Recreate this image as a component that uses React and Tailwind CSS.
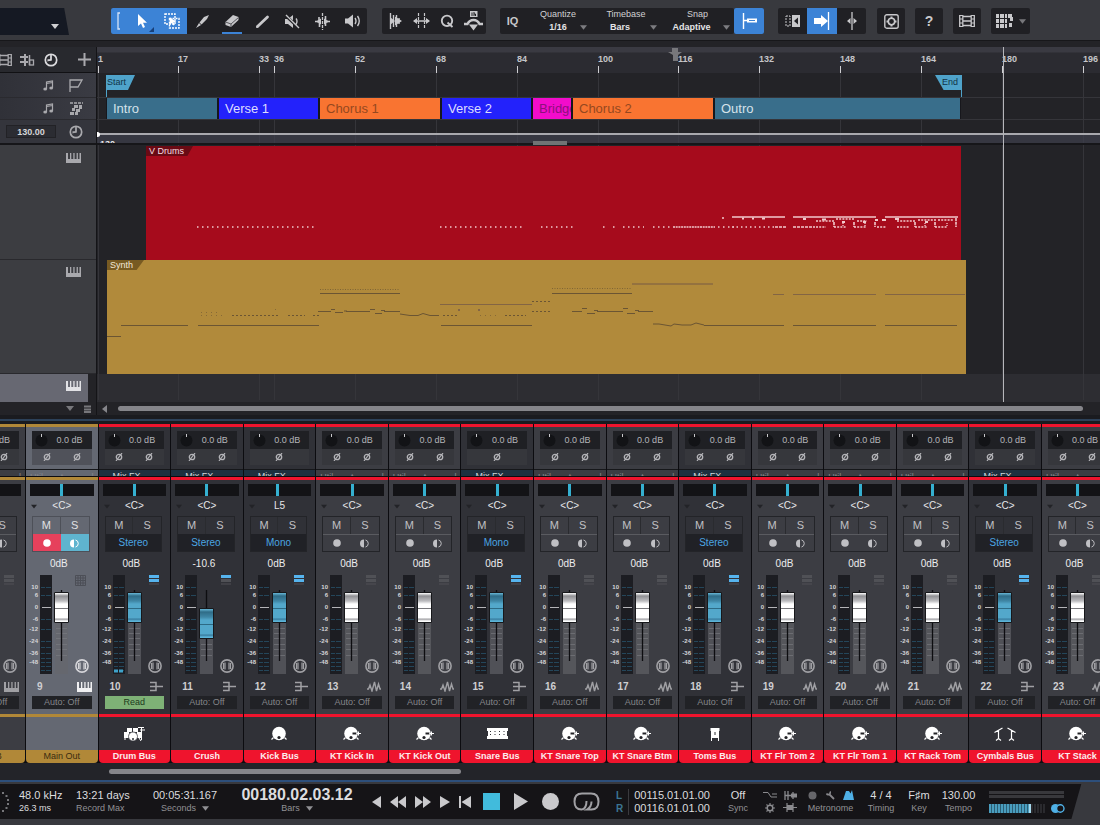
import React from 'react';
import clsx from 'clsx';

const RULER = [1, 17, 33, 36, 52, 68, 84, 100, 116, 132, 148, 164, 180, 196];
const RULER_COLS =
  'grid-cols-[1fr_80fr_81fr_15fr_81fr_81fr_81fr_81fr_80fr_81fr_81fr_81fr_81fr_81fr_17fr]';

const SECTIONS = [
  { name: 'Intro', style: 'bg-[#396e8b] text-[#d5e2ea]' },
  { name: 'Verse 1', style: 'bg-[#2322fb] text-[#dedeff]' },
  { name: 'Chorus 1', style: 'bg-[#f97431] text-[#95481f]' },
  { name: 'Verse 2', style: 'bg-[#2322fb] text-[#dedeff]' },
  { name: 'Bridge', style: 'bg-[#f20ccb] text-[#8d0f7d]' },
  { name: 'Chorus 2', style: 'bg-[#f97431] text-[#95481f]' },
  { name: 'Outro', style: 'bg-[#396e8b] text-[#d5e2ea]' },
];

const CHANNELS = [
  { no: 9, name: 'Main Out', kind: 'main' },
  { no: 10, name: 'Drum Bus', kind: 'bus', width: 'Stereo', icon: 'kit', read: true },
  { no: 11, name: 'Crush', kind: 'bus', width: 'Stereo', gain: '-10.6', level: 52 },
  { no: 12, name: 'Kick Bus', kind: 'bus', width: 'Mono', pan: -5, icon: 'kick' },
  { no: 13, name: 'KT Kick In', kind: 'track', icon: 'mic' },
  { no: 14, name: 'KT Kick Out', kind: 'track', icon: 'mic' },
  { no: 15, name: 'Snare Bus', kind: 'bus', width: 'Mono', icon: 'snare' },
  { no: 16, name: 'KT Snare Top', kind: 'track', icon: 'mic' },
  { no: 17, name: 'KT Snare Btm', kind: 'track', icon: 'mic' },
  { no: 18, name: 'Toms Bus', kind: 'bus', width: 'Stereo', icon: 'tom' },
  { no: 19, name: 'KT Flr Tom 2', kind: 'track', icon: 'mic' },
  { no: 20, name: 'KT Flr Tom 1', kind: 'track', icon: 'mic' },
  { no: 21, name: 'KT Rack Tom', kind: 'track', icon: 'mic' },
  { no: 22, name: 'Cymbals Bus', kind: 'bus', width: 'Stereo', icon: 'cymbals' },
];

const Svg = ({ w, h, children, className }) => (
  <svg width={w} height={h} viewBox={`0 0 ${w} ${h}`} className={clsx('shrink-0', className)} fill="none" stroke="currentColor" aria-hidden="true">
    {children}
  </svg>
);

const Down = ({ className }) => (
  <Svg w={8} h={5} className={className}><path d="M0 0h8L4 5z" fill="currentColor" stroke="none" /></Svg>
);

const Keys = ({ className }) => (
  <Svg w={15} h={10} className={className}>
    <path d="M0 0h2v6h2V0h1.3v6h2V0h1.3v6h2V0h1.3v6h1.6V0H15v10H0z" fill="currentColor" stroke="none" />
  </Svg>
);

const Note = () => (
  <Svg w={11} h={11}>
    <path d="M3.5 9V2l6-1v7M3.5 3.5l6-1" strokeWidth="1.2" />
    <ellipse cx="2.2" cy="9" rx="1.9" ry="1.5" fill="currentColor" stroke="none" />
    <ellipse cx="8.2" cy="8" rx="1.9" ry="1.5" fill="currentColor" stroke="none" />
  </Svg>
);

const Clock = () => (
  <Svg w={14} h={14}>
    <circle cx="7" cy="7" r="5.7" strokeWidth="1.7" />
    <path d="M7 2v5H3.5" strokeWidth="1.5" />
    <path d="M7 2.5v4.3L3.5 8" strokeWidth="1" />
  </Svg>
);

const Film = () => (
  <Svg w={16} h={14}>
    <path d="M.7 1v12M3.8 1v12M12.2 1v12M15.3 1v12M3.8 2.500h8.400M3.8 7h8.400M3.8 11.500h8.400" strokeWidth="1.3" />
    <path d="M.7 1.5h3M.7 5h3M.7 9h3M.7 12.5h3M12.200 1.500h3M12.200 5h3M12.200 9h3M12.200 12.500h3" strokeWidth="1" />
  </Svg>
);

/* ---------- toolbar ---------- */

const Tool = ({ label, on, underline, className, children }) => (
  <button
    type="button"
    aria-label={label}
    className={clsx('relative flex h-full items-center justify-center', on ? 'bg-[#3c83d6] text-white' : 'text-[#c8c8cb]', className || 'w-[30px]')}
  >
    {children}
    {underline && <span className="absolute bottom-0 h-[2px] w-5 bg-[#3c83d6]" />}
  </button>
);

const Group = ({ className, children }) => (
  <div className={clsx('flex h-[26px] shrink-0 overflow-hidden rounded-[2px] bg-[#202024]', className)}>{children}</div>
);

const Picker = ({ label, value, className, textPad }) => (
  <label className={clsx('relative flex flex-col text-center text-[9px] text-[#d0d0d3]', className)}>
    <span className="h-[13px] leading-[13px]">{label}</span>
    <select defaultValue={value} className={clsx('h-[13px] w-full appearance-none bg-transparent font-bold leading-[13px] text-[#e4e4e6] [text-align-last:center]', textPad)}>
      <option>{value}</option>
    </select>
    <Down className="absolute bottom-1 right-1 w-[7px] text-[#7c7c80]" />
  </label>
);

const Toolbar = () => (
  <header className="flex h-[41px] items-start overflow-hidden border-b border-[#17171a] bg-[#38393e] pt-2">
    <button type="button" aria-label="Preset" className="flex h-[27px] w-[69px] shrink-0 items-end justify-end bg-[#151923] pb-[6px] pr-[10px] text-[#d0d0d3] [clip-path:polygon(0_0,93%_0,100%_100%,0_100%)]">
      <Down />
    </button>
    <Group className="ml-[42px]">
      <span className="flex w-4 items-center justify-center bg-[#3c83d6] text-[#d5e4f8]">
        <Svg w={6} h={18}><path d="M4 1H2v16h2" strokeWidth="1.3" /></Svg>
      </span>
      <Tool label="Arrow tool" on>
        <Svg w={12} h={16}><path d="M2 1v12l3-2.6L7 15l2-1-2-4.3h4z" fill="currentColor" stroke="none" /></Svg>
        <Svg w={5} h={5} className="absolute bottom-[2px] right-[3px] text-[#173f78]"><path d="M5 0v5H0z" fill="currentColor" stroke="none" /></Svg>
      </Tool>
      <Tool label="Range tool" on>
        <Svg w={16} h={16}>
          <path d="M1 1h10v10H1z" strokeWidth="1.4" strokeDasharray="2 1" />
          <path d="M5.500 5.500h9.500v9.500H5.500z" strokeWidth="1.4" strokeDasharray="2 1" />
          <path d="M6 4.500v7l2-1.500 1.500 2.500 1.300-.8L9.500 9h3z" fill="currentColor" stroke="none" />
        </Svg>
      </Tool>
      <Tool label="Split tool">
        <Svg w={15} h={15}><path d="M14 1 9 3 4.5 8.5l2 2L12 5zM4 9l-3 5 5-3z" fill="currentColor" stroke="none" /></Svg>
      </Tool>
      <Tool label="Eraser tool" underline>
        <Svg w={16} h={14}>
          <path d="M1.5 8 9 1l5.5 2v3L7 13 1.5 11z" fill="currentColor" stroke="none" />
          <path d="M1.5 8 7 10l7.5-6.5M7 10v3" stroke="#55555a" strokeWidth="1" />
        </Svg>
      </Tool>
      <Tool label="Paint tool">
        <Svg w={15} h={15}><path d="M2.5 12.5 12.5 3" strokeWidth="2.8" strokeLinecap="round" /><path d="M1 14l1-3 2 2z" fill="currentColor" stroke="none" /></Svg>
      </Tool>
      <Tool label="Mute tool">
        <Svg w={16} h={15}>
          <path d="M1 5h3l5-4v13l-5-4H1z" fill="currentColor" stroke="none" />
          <path d="M1 1l14 13" stroke="#202024" strokeWidth="3" />
          <path d="M2 1l13 13M12 4.5q2 2.5 0 6" strokeWidth="1.4" />
        </Svg>
      </Tool>
      <Tool label="Bend tool">
        <Svg w={15} h={17}>
          <path d="M7.5 0v17" strokeWidth="1.3" strokeDasharray="3 1" />
          <path d="M0 8.5h3M12 8.5h3M4 4v4M4.5 10v4M10.5 3v4M10.5 10v3" strokeWidth="1.6" />
          <path d="M1 8.5 6 5.500v6zM14 8.500l-5-3v6z" fill="currentColor" stroke="none" />
        </Svg>
      </Tool>
      <Tool label="Listen tool">
        <Svg w={17} h={14}>
          <path d="M1 4.5h3L9 .5v13L4 9.5H1z" fill="currentColor" stroke="none" />
          <path d="M11 4q2 3 0 6M13.5 2q3.5 5 0 10" strokeWidth="1.4" />
        </Svg>
      </Tool>
    </Group>
    <Group className="ml-[15px]">
      <Tool label="Strip silence" className="w-[26px]">
        <Svg w={13} h={16}><path d="M1.5 0v16M4.5 2v12M7.5 2v12M10 5v6" strokeWidth="1.4" /><path d="M1 4l5 4-5 4zM6 3.500l7 4.500-7 4.500z" fill="currentColor" stroke="none" /></Svg>
      </Tool>
      <Tool label="Bend markers" className="w-[26px]">
        <Svg w={17} h={16}><path d="M1 8h15" strokeWidth="1.5" /><path d="M5.5 0v16M11.5 0v16" strokeWidth="1.2" strokeDasharray="3 1" /><path d="M0 8l4-3v6zM17 8l-4-3v6z" fill="currentColor" stroke="none" /></Svg>
      </Tool>
      <Tool label="Quantize" className="w-[26px]">
        <Svg w={14} h={14}><circle cx="7" cy="6.8" r="5.2" strokeWidth="1.9" /><path d="M7.5 8.5l5 4.5" strokeWidth="1.9" /></Svg>
      </Tool>
      <Tool label="Macro" className="w-[26px]">
        <Svg w={19} h={20}>
          <path d="M6 0h7.500v6H6z" fill="currentColor" stroke="none" />
          <path d="M8 1.500V5M10 1v4M10 3h1.500v2" stroke="#202024" />
          <path d="M0 13h3.500q2-4 6-4t6 4H19" strokeWidth="2.400" />
          <path d="M5 13.500h9L9.500 19.500z" fill="currentColor" stroke="none" />
        </Svg>
      </Tool>
    </Group>
    <Group className="ml-[14px]">
      <Tool label="Input quantize" className="w-[25px] text-[11px] font-bold">IQ</Tool>
      <Picker label="Quantize" value="1/16" className="w-[66px]" />
      <Picker label="Timebase" value="Bars" className="w-[70px]" textPad="pr-3" />
      <Picker label="Snap" value="Adaptive" className="w-[73px]" textPad="pr-3" />
    </Group>
    <Group>
      <Tool label="Snap toggle" on>
        <Svg w={15} h={16}><path d="M1.500 0v16" strokeWidth="1.400" /><path d="M2 7.500h4" strokeWidth="1.400" /><path d="M5 5.500h10v4H5z" fill="currentColor" stroke="none" /><path d="M7 7.500h6" stroke="#3c83d6" strokeWidth="1" /></Svg>
      </Tool>
    </Group>
    <Group className="ml-[14px]">
      <Tool label="Autoscroll page" className="w-[29px]">
        <Svg w={15} h={12}><path d="M1 1h4v10H1z" strokeDasharray="2 1" /><path d="M7 0h8v12H7z" fill="currentColor" stroke="none" /><path d="M13 2.500v7L9 6z" fill="#202024" stroke="none" /></Svg>
      </Tool>
      <Tool label="Autoscroll" on>
        <Svg w={16} h={18}><path d="M14.500 0v18" strokeWidth="1.300" /><path d="M0 6h7V3l7 6-7 6v-3H0z" fill="currentColor" stroke="none" /></Svg>
      </Tool>
      <Tool label="Cursor follows edit" className="w-[29px]">
        <Svg w={12} h={18}><path d="M6 0v18" strokeWidth="1.300" /><path d="M1 9l3.500-3v6zM11 9 7.500 6v6z" fill="currentColor" stroke="none" /></Svg>
      </Tool>
    </Group>
    <Group className="ml-[11px]">
      <Tool label="Plug-in" className="w-[28px]">
        <Svg w={15} h={15}><rect x=".8" y=".8" width="13.400" height="13.400" rx="2" strokeWidth="1.400" /><circle cx="7.500" cy="7.500" r="3.200" strokeWidth="1.600" /><path d="M7.500 2.500v2M7.500 10.500v2M2.500 7.500h2M10.500 7.500h2" strokeWidth="2" /></Svg>
      </Tool>
    </Group>
    <Group className="ml-[10px]">
      <Tool label="Help" className="w-[28px] text-[14px] font-bold">?</Tool>
    </Group>
    <Group className="ml-[10px]">
      <Tool label="Video" className="w-[28px]"><Film /></Tool>
    </Group>
    <Group className="ml-[10px]">
      <Tool label="Performance" className="w-[39px] gap-1">
        <Svg w={20} h={16}>
          <path d="M1 1h3v4H1zM5 1h4v4H5zM10 1h2v4h-2zM1 6h3v4H1zM5 6h4v4H5zM1 11h3v4H1zM5 11h4v4H5zM10 6h2v4h-2zM10 11h2v4h-2zM13 1h4v3h1v4h-3V5h-2zM14 10h3v4h-3z" fill="currentColor" stroke="none" />
        </Svg>
        <Down className="w-[7px] text-[#77777b]" />
      </Tool>
    </Group>
  </header>
);

/* ---------- arrangement ---------- */

const LaneHeads = () => (
  <div className="flex w-[97px] shrink-0 flex-col overflow-hidden border-r border-[#141417] text-[#a9a9ad]">
    <div className="flex h-[26px] items-center justify-between border-b border-[#111114] bg-[#28292e] pr-[5px]">
      <button type="button" aria-label="Film" className="flex w-[12px] justify-end overflow-hidden"><Film /></button>
      <button type="button" aria-label="Lanes">
        <Svg w={15} h={14}><path d="M0 4h8M0 9h8M5 1v12" strokeWidth="2" /><path d="M9.500 2v10" strokeWidth="1.500" /><rect x="9.500" y="7" width="4" height="5" strokeWidth="1.300" /></Svg>
      </button>
      <button type="button" aria-label="Timebase" className="text-[#dcdcdf]"><Clock /></button>
      <span className="w-1" />
      <button type="button" aria-label="Add track"><Svg w={13} h={13}><path d="M6.500 0v13M0 6.500h13" strokeWidth="2" /></Svg></button>
    </div>
    <div className="flex h-[25px] items-center justify-end gap-[15px] border-b border-[#2a2a2f] bg-linear-to-r from-[#303138] to-[#3a3b43] pr-[13px]">
      <Note />
      <Svg w={14} h={13}><path d="M1 13V1h12L9 8H1" strokeWidth="1.300" /></Svg>
    </div>
    <div className="flex h-[22px] items-center justify-end gap-[15px] border-b border-[#2a2a2f] bg-linear-to-r from-[#303138] to-[#3a3b43] pr-[13px]">
      <Note />
      <Svg w={14} h={13}><path d="M1 1h13" strokeDasharray="3 1" strokeWidth="1.400" /><path d="M5 3h4v3H5zM10 3h3v4h-3zM3 6h3v3H3zM7 7h4v3H7zM1 10h4v3H1zM6 10h3v3H6z" fill="currentColor" stroke="none" /></Svg>
    </div>
    <div className="flex h-[23px] items-center justify-end gap-[13px] bg-[#34353c] pr-[13px]">
      <input aria-label="Tempo" defaultValue="130.00" className="h-[13px] w-[50px] border border-[#222226] bg-[#2b2c32] text-center text-[9px] font-bold text-[#d6d6d9]" />
      <Clock />
    </div>
    <div className="h-[2px] bg-[#161619]" />
    <div className="h-[115px] border-b border-[#29292d] bg-[#3c3d41] pl-[66px] pt-2">
      <Keys />
    </div>
    <div className="h-[114px] border-b border-[#29292d] bg-[#3c3d41] pl-[66px] pt-[7px]">
      <Keys />
    </div>
    <div className="mr-2 h-[28px] bg-[#676872] pl-[66px] pt-[7px] text-[#e2e2e6]">
      <Keys />
    </div>
    <div className="flex h-[13px] items-center justify-end gap-[10px] bg-[#232327] pr-[5px] text-[#77777b]">
      <Down />
      <Svg w={7} h={8}><path d="M0 1.500h7M0 4.500h7M0 7h7" strokeWidth="2" /></Svg>
    </div>
  </div>
);

const DrumNotes = () => (
  <svg viewBox="146 146 815 114" preserveAspectRatio="none" className="absolute inset-0 h-full w-full" fill="none" stroke="#f2c9cc" aria-hidden="true">
    <g strokeWidth="1.300">
      <path d="M197 227h119M440 227h84M541 227h33M603 227h2M613 227h2M623 227h21M653 227h20M718 227h16" strokeDasharray="1.500 3.500" />
      <path d="M673 227h42" strokeDasharray="2 .7" />
      <path d="M722 218h2M732 217h53M793 217h83M885 217h73" />
      <path d="M732 227h42" strokeDasharray="1.500 3" />
      <path d="M775 227h12M793 227h22" strokeDasharray="3 1" />
      <path d="M816 221h18M836 219h18M857 221h10M897 221h18M918 220h18M938 220h16M816 227h10M834 227h12M854 227h12M877 227h9M897 227h12M915 227h12M935 227h12" strokeDasharray="2 1.200" />
      <path d="M742 218.500h2M752 218.500h2M762 218.500h3M803 219h3M822 219.500h4M842 222h3M863 222h3M875 220h3M882 220h4M895 219h4M925 222h3" strokeWidth="2" />
      <path d="M834 222v5M854 222v5M875 222v5M915 222v5M935 222v5M956 218v9" strokeWidth="1.600" strokeDasharray="3 .8" />
      <path d="M843 223v4M865 223v4M925 223v4M947 223v4" strokeDasharray="1 1" />
    </g>
  </svg>
);

const SynthNotes = () => (
  <svg viewBox="107 260 859 114" preserveAspectRatio="none" className="absolute inset-0 h-full w-full" fill="none" stroke="#6b5533" aria-hidden="true">
    <path d="M107 336.500h14M121 325.500h67M198 325.500h121M441 325.500h91M704 325.500h80M793 325.500h83M885 325.500h72" />
    <path d="M320 293.500h80M552 293.500h80M318 311.500h13M346 311.500h24M384 311.500h16M572 311.500h10M597 311.500h26M638 311.500h15" />
    <path d="M331 309.500h4M335 312.500h8M344 311h3M370 309.500h5M375 313.500h7M381 310.500h4M582 308.500h5M587 313.500h8M594 310.500h4M623 308.500h5M627 313.500h8M635 310.500h4" />
    <path d="M400 314l10 1.500h8l5-2 7 2h9M653 324h6l12 2 3-2 8 1h9l5-2 8 2" />
    <path d="M232 315.500h48M288 315.500h17M313 315.500h7M443 315.500h14M505 315.500h21M532 301.500h20M532 311.500h20" strokeDasharray="2 2" />
    <path d="M201 315.500h22M201 312.500h20M480 315.500h17M275 309.500h5" strokeDasharray="1 4" strokeOpacity=".6" />
    <path d="M320 289.500h80M552 288.500h80" strokeDasharray="1 1.500" strokeOpacity=".7" />
    <path d="M440 304.500h92M773 294.500h11M793 294.500h83M885 294.500h80" stroke="#836544" />
    <path d="M632 284h81" stroke="#94723f" strokeWidth="2" />
    <path d="M458 310h2M478 310h2" stroke="#836544" strokeWidth="2" />
  </svg>
);

const Arrangement = () => (
  <div className="relative flex min-w-0 flex-1 flex-col overflow-hidden bg-[#232327]">
    <div className={clsx('grid h-[26px] bg-linear-to-b from-[#3a3a42] from-[18%] to-[#2b2b31] to-[24%]', RULER_COLS)}>
      <span />
      {RULER.map((bar) => (
        <span key={bar} className="relative min-w-0 pt-[6px] text-[9px] font-bold leading-[13px] text-[#c5c5c9]">
          {bar}
          <span className="absolute bottom-0 left-0 h-[7px] w-px bg-[#cfcfd2]" />
        </span>
      ))}
    </div>
    <div className={clsx('pointer-events-none absolute inset-x-0 bottom-[15px] top-[26px] grid', RULER_COLS)}>
      <span />
      {RULER.map((bar) => <span key={bar} className="border-l border-[#35353a]" />)}
    </div>
    <div className="absolute inset-x-0 top-0 grid grid-cols-[571fr_432fr] text-[#77777b]">
      <span />
      <Svg w={14} h={14}><path d="M4 1h6v4h4l-4 3v6H5V8L0 5h4z" fill="currentColor" stroke="none" /></Svg>
    </div>

    <div className="relative grid h-[25px] grid-cols-[9fr_829fr_27fr_138fr] border-b border-[#35353a] text-[9px] leading-[15px] text-[#123345]">
      <span />
      <div className="mt-[2px] border-l border-[#4fa3ca]">
        <div className="h-[15px] w-7 bg-[#4fa3ca] [clip-path:polygon(0_0,100%_0,75%_100%,0_100%)]">Start</div>
      </div>
      <div className="mt-[2px] border-r border-[#4fa3ca]">
        <div className="h-[15px] bg-[#4fa3ca] pr-[3px] text-right [clip-path:polygon(0_0,100%_0,100%_100%,33%_100%)]">End</div>
      </div>
    </div>

    <div className="relative grid h-[22px] grid-cols-[9fr_112fr_101fr_122fr_91fr_40fr_142fr_247fr_139fr] border-b border-[#35353a]">
      <span />
      {SECTIONS.map((s) => (
        <div key={s.name} className={clsx('min-w-0 overflow-hidden border-x border-[#17171c] pl-[6px] text-[13px] leading-[21px]', s.style)}>{s.name}</div>
      ))}
    </div>

    <div className="relative h-[25px] border-b-2 border-[#161619]">
      <div className="h-[15px] border-b-2 border-[#a9a9ae]" />
      <div className="h-2 overflow-hidden bg-[#3f404d]/70 pl-[3px] pt-[5px] text-[9px] font-bold leading-[9px] text-[#e5e5e8]">130</div>
      <div className="absolute -bottom-[2px] left-0 grid w-full grid-cols-[436fr_34fr_533fr]"><span /><span className="h-1 bg-[#707475]" /></div>
      <span className="absolute left-0 top-3 h-[5px] w-[3px] rounded-r bg-white" />
    </div>

    <div className="relative grid h-[115px] grid-cols-[49fr_815fr_139fr] pt-px">
      <span />
      <div className="relative bg-[#a60b1c]">
        <span className="absolute left-0 top-0 h-[10px] w-[47px] bg-[#6a0a14] pl-[3px] text-[9px] leading-[10px] text-[#f4dfe1] [clip-path:polygon(0_0,100%_0,88%_100%,0_100%)]">V Drums</span>
        <DrumNotes />
      </div>
    </div>
    <div className="relative grid h-[114px] grid-cols-[10fr_859fr_134fr]">
      <span />
      <div className="relative bg-[#b18a3b]">
        <span className="absolute left-0 top-0 h-[10px] w-[37px] bg-[#775a22] pl-[3px] text-[9px] leading-[10px] text-[#f2e9d8] [clip-path:polygon(0_0,100%_0,80%_100%,0_100%)]">Synth</span>
        <SynthNotes />
      </div>
    </div>
    <div className="h-[28px] bg-[#2d2d32]" />
    <div className="flex h-[13px] items-center gap-[10px] bg-[#232327] pl-1 pr-[17px] text-[#85858a]">
      <Svg w={7} h={8}><path d="M6 0v8L1 4z" fill="currentColor" stroke="none" /></Svg>
      <span className="h-[5px] flex-1 rounded-full bg-[#85858a]" />
    </div>

    <div className="pointer-events-none absolute inset-x-0 bottom-[13px] top-0 grid grid-cols-[906fr_97fr]">
      <span />
      <span className="border-l border-[#b6b6ba]" />
    </div>
  </div>
);

/* ---------- console ---------- */

const SCALE = [['10', 12], ['6', 20], ['0', 32], ['-6', 44], ['-12', 54], ['-24', 66], ['-36', 78], ['-48', 87]];

const Meter = ({ active }) => (
  <svg width="26" height="100" viewBox="0 0 26 100" className="shrink-0" aria-hidden="true">
    <rect x="14" width="12" height="99" fill="#1c1d22" />
    {[12, 20, 44, 54, 66, 72, 78, 83, 87, 91, 95].map((y) => (
      <path key={y} d={`M15 ${y + 0.5}h4M20 ${y + 0.5}h5`} stroke="#24465a" />
    ))}
    <path d="M16 32.500h9" stroke="#b4b4b8" />
    {active && <path d="M15 96h4M20 96h4" stroke="#3fa2c9" strokeWidth="3" />}
    {SCALE.map(([t, y]) => (
      <text key={t} x="12" y={y + 2} textAnchor="end" fontSize="6" fontWeight="bold" fill="#d6d6d9">{t}</text>
    ))}
  </svg>
);

const THUMB =
  '[&::-webkit-slider-thumb]:appearance-none [&::-webkit-slider-thumb]:h-[31px] [&::-webkit-slider-thumb]:w-[15px] [&::-webkit-slider-thumb]:rounded-[1px] [&::-webkit-slider-thumb]:border [&::-webkit-slider-thumb]:border-[#17181b]';

const Fader = ({ name, level, white }) => (
  <div className="relative ml-[2px] h-[99px] w-[15px] shrink-0">
    <Svg w={15} h={99} className="absolute inset-0">
      <path d="M1 47h13v52H1z" fill="#66676c" fillOpacity=".6" stroke="none" />
      <path d="M2 53.500h11M2 58.500h11M2 63.500h11M2 69.500h11M2 74.500h11M2 80.500h11" stroke="#7c7d82" strokeOpacity=".6" />
      <path d="M7.500 15v71" stroke="#0d0d10" strokeWidth="1.300" />
    </Svg>
    <input
      type="range"
      aria-label={`${name} level`}
      defaultValue={level}
      className={clsx(
        'absolute inset-0 m-0 h-full w-full appearance-none bg-transparent [direction:rtl] [writing-mode:vertical-lr]',
        THUMB,
        white
          ? '[&::-webkit-slider-thumb]:bg-[linear-gradient(#fff_0,#8f8f93_3px,#bdbdc0_8px,#fff_11px,#fff_15px,#77777b_15px,#77777b_16px,#fff_16px,#fff_25px,#9a9a9e_26px,#fff_28px)]'
          : '[&::-webkit-slider-thumb]:bg-[linear-gradient(#68b8d8_0,#2f6c87_3px,#3f86a5_8px,#53a8cb_11px,#53a8cb_15px,#2d6a84_15px,#2d6a84_16px,#53a8cb_16px,#53a8cb_25px,#36789a_26px,#5cb4d8_28px)]',
      )}
    />
  </div>
);

const HalfDot = () => (
  <Svg w={9} h={9}><path d="M4 .5a4 4 0 0 0 0 8z" fill="currentColor" stroke="none" /><path d="M5.500 1a3.600 3.600 0 0 1 0 7" strokeWidth="1" /></Svg>
);

const KindIcon = ({ kind }) => {
  if (kind === 'main') return <Keys className="text-[#f0f0f2]" />;
  if (kind === 'keys') return <Keys />;
  if (kind === 'bus') return <Svg w={13} h={11}><path d="M0 1.500h6v8H0M0 5.500h13" strokeWidth="1.500" /></Svg>;
  return <Svg w={14} h={11}><path d="M0 8h1.500L3 4l2 6 2.500-9 2 9L11.500 3l1.500 5h1" strokeWidth="1.400" /></Svg>;
};

const Instrument = ({ icon }) => {
  switch (icon) {
    case 'kit':
      return (
        <Svg w={22} h={16}>
          <path d="M1 6h5v6H1zM4 2h5v4H4zM10 2h5v4h-5zM14 6h4v6h-4z" fill="currentColor" stroke="none" />
          <circle cx="10" cy="10.500" r="4.500" fill="currentColor" stroke="#2e2f35" strokeWidth=".7" />
          <path d="M15 1.500h6M18.500 1v13M17 4h5M2 12v2M16 12l2 3" />
          <circle cx="10" cy="13" r="1" fill="#2e2f35" stroke="none" />
        </Svg>
      );
    case 'kick':
    case 'mic':
      return (
        <Svg w={icon === 'mic' ? 18 : 16} h={15}>
          <circle cx="8" cy="7.500" r="6.800" fill="currentColor" stroke="none" />
          <path d="M2.500 11.500.5 13.500M13.500 11.500l2 2" strokeWidth="1.200" />
          <circle cx="8" cy="11.500" r="1.600" fill="#222226" stroke="none" />
          {icon === 'mic' && <path d="M9.500 7.500h4" stroke="#222226" strokeWidth="2" />}
          {icon === 'mic' && <path d="M13.500 7.500H18M15.500 5.500v4" />}
        </Svg>
      );
    case 'snare':
      return (
        <Svg w={21} h={11}>
          <path d="M0 0h21v3H0zM0 8h21v3H0zM1 3h19v5H1z" fill="currentColor" stroke="none" />
          <path d="M3.500 3v2M3.500 6v2M8 3v2M8 6v2M12.500 3v2M12.500 6v2M17 3v2M17 6v2" stroke="#2e2f35" strokeDasharray="1 1" />
        </Svg>
      );
    case 'tom':
      return (
        <Svg w={10} h={14}>
          <path d="M.5 1h9v3h-9zM1 4h8v7H1z" fill="currentColor" stroke="none" />
          <path d="M5 5v3" stroke="#2e2f35" />
          <path d="M1.500 11v3M8.500 11v3" />
        </Svg>
      );
    case 'cymbals':
      return (
        <Svg w={22} h={14}><path d="M.5 5.500 8.500 1M4.500 3.500V12M2 13.500l2.500-2 2.500 2M21.500 5.500 13.500 1M17.500 3.500V12M15 13.500l2.500-2 2.500 2" strokeWidth="1.200" /></Svg>
      );
    default:
      return null;
  }
};

const Channel = ({ no, name, kind, width, icon, gain = '0dB', pan = 0, level = 75, read }) => {
  const gold = kind === 'main' || kind === 'keys';
  const bus = kind === 'bus';
  const main = kind === 'main';
  const line = gold ? 'bg-[#b18838]' : 'bg-[#ef142d]';
  const body = main ? 'bg-[#646872]' : bus ? 'bg-[#303137]' : 'bg-[#3c3d43]';
  return (
    <article aria-label={name} className="flex w-full min-w-0 flex-col overflow-hidden border-r border-[#0c0c10] text-[#b4b4b8]">
      <div className={clsx('h-[3px]', line)} />
      <div className={clsx('h-[49px] overflow-hidden px-[6px] pt-1', body)}>
        <div className="flex h-[18px] items-center justify-between bg-[#1f2024] pl-[3px] pr-[9px] text-[9px]">
          <button type="button" aria-label={`${name} input gain`}>
            <Svg w={13} h={13}><circle cx="6.500" cy="6.500" r="6" fill="#121316" stroke="none" /><path d="M6.500 0v3" stroke="#c9c9cc" /></Svg>
          </button>
          <span>0.0 dB</span>
        </div>
        <div className={clsx('flex h-4 items-center justify-around', main ? 'bg-[#50525a]' : 'bg-[#36373c]')}>
          {(width === 'Mono' ? [0] : [0, 1]).map((i) => (
            <button type="button" key={i} aria-label={`${name} polarity ${i + 1}`}>
              <Svg w={8} h={8}><circle cx="4" cy="4" r="2.700" strokeWidth="1.300" /><path d="M1 8l6-8" strokeWidth="1.200" /></Svg>
            </button>
          ))}
        </div>
        <div className={clsx('-mx-[6px] mt-1 flex h-[8px] items-start overflow-hidden border-t border-[#16171a] text-[9px] leading-[9px]', bus ? 'bg-[#1e303f] px-[14px] pt-[2px] text-[#d0d6da]' : 'px-1 pt-[3px] text-[#85868a]')}>
          {bus ? 'Mix FX' : <><span className="flex-1">Util.</span><span className="flex-1">t</span><span>l</span></>}
        </div>
      </div>
      <div className="h-px bg-[#0c0c10]" />
      <div className={clsx('h-[3px]', line)} />
      <div className={clsx('flex h-[234px] flex-col pt-1', body)}>
        <input
          type="range"
          aria-label={`${name} pan`}
          min="-100"
          max="100"
          defaultValue={pan}
          className="mx-1 my-0 h-3 w-auto appearance-none bg-[#131316] [&::-webkit-slider-thumb]:h-3 [&::-webkit-slider-thumb]:w-[3px] [&::-webkit-slider-thumb]:appearance-none [&::-webkit-slider-thumb]:bg-[#35b0d0]"
        />
        <div className="relative flex h-5 items-center justify-center text-[10px] text-[#e6e6e9]">
          <Down className="absolute left-[5px] w-[6px] text-[#222327]" />
          {pan ? 'L5' : '<C>'}
        </div>
        <div className={clsx('ml-[6px] mr-2 grid h-9 grid-cols-2 border text-[11px]', main ? 'border-[#4d5058] text-[#e0e0e3]' : 'border-[#232428] text-[#c0c0c4]')}>
          <button type="button" className={clsx('h-[17px] border-r leading-[17px]', main ? 'border-[#4d5058]' : 'border-[#2a2b2f]')}>M</button>
          <button type="button" className="h-[17px] leading-[17px]">S</button>
          {bus ? (
            <button type="button" className="col-span-2 h-[17px] bg-[#202126] text-[10px] leading-[17px] text-[#4ba5e2]">{width}</button>
          ) : (
            <>
              <button type="button" aria-label={`${name} record`} className={clsx('flex h-[17px] items-center justify-center border-t', main ? 'border-transparent bg-[#e6415c] text-white' : 'border-[#5a5b60]')}>
                <Svg w={8} h={8}><circle cx="4" cy="4" r="3.800" fill="currentColor" stroke="none" /></Svg>
              </button>
              <button type="button" aria-label={`${name} monitor`} className={clsx('flex h-[17px] items-center justify-center border-t', main ? 'border-transparent bg-[#5fb4cf] text-white' : 'border-[#5a5b60]')}>
                <HalfDot />
              </button>
            </>
          )}
        </div>
        <div className="flex h-[23px] items-center justify-center pr-[6px] text-[10px] text-[#ececee]">{gain}</div>
        <div className="flex h-[100px]">
          <Meter active={read} />
          <Fader name={name} level={level} white={!bus} />
          <div className="ml-[6px] flex flex-1 flex-col items-start justify-between pb-[2px]">
            {main ? (
              <Svg w={11} h={11} className="text-[#4c4f57]"><path d="M.5.5h10v10H.5zM3 .5v10M5.500.5v10M8 .5v10M.5 3h10M.5 5.500h10M.5 8h10" /></Svg>
            ) : (
              <Svg w={11} h={10} className={bus ? 'text-[#56b4ee]' : 'text-[#505156]'}>
                <path d="M1 1.500h10" strokeWidth="3" />
                <path d="M1 5.500h10" strokeWidth="3" className={gain === '0dB' ? '' : 'text-[#505156]'} />
                <path d="M1 9h10" className="text-[#505156]" />
              </Svg>
            )}
            <button type="button" aria-label={`${name} channel mode`} className={main ? 'text-[#d5d5d9]' : 'text-[#a0a0a4]'}>
              <Svg w={14} h={14}><circle cx="7" cy="7" r="6.100" strokeWidth="1.600" /><path d="M5 3.500v7M9 3.500v7M3.500 4v6M10.500 4v6" strokeWidth="1.200" /></Svg>
            </button>
          </div>
        </div>
        <div className="flex h-[21px] items-center justify-between pl-[11px] pr-[6px] pt-[2px] text-[10px] font-bold text-[#cfcfd2]">
          {no}
          <span className="flex w-[15px] justify-center text-[#a0a0a4]"><KindIcon kind={kind} /></span>
        </div>
        <button type="button" className={clsx('mx-[6px] h-[13px] text-[9px] leading-[13px]', read ? 'bg-[#7eb176] text-[#1c3a1c]' : 'bg-[#212226] text-[#85868a]')}>
          {read ? 'Read' : 'Auto: Off'}
        </button>
      </div>
      <div className={clsx('h-[3px]', line)} />
      <div className={clsx('flex h-[33px] items-center justify-center text-white', body)}><Instrument icon={icon} /></div>
      <div className={clsx('h-[13px] overflow-hidden whitespace-nowrap rounded-b-[4px] text-center text-[9px] leading-[13px]', line, gold ? 'text-[#3a2c10]' : 'font-bold text-[#fdecee]')}>{name}</div>
    </article>
  );
};

const Console = () => (
  <section aria-label="Console" className="bg-[#232429]">
    <div className="flex h-[9px] items-center bg-[#1a1b1f]"><div className="h-[2px] w-full bg-[#2c4159]" /></div>
    <div className="grid grid-cols-[26px_repeat(14,minmax(0,1fr))_58px] bg-[#0c0c10]">
      <div className="flex justify-end overflow-hidden">
        <div className="flex w-[72px] shrink-0"><Channel no={8} name="Pad B" kind="keys" /></div>
      </div>
      {CHANNELS.map((c) => <Channel key={c.no} {...c} />)}
      <div className="flex overflow-hidden">
        <div className="flex w-[72px] shrink-0"><Channel no={23} name="KT Stack" kind="track" icon="mic" /></div>
      </div>
    </div>
    <div className="grid h-[17px] grid-cols-[109fr_352fr_639fr] items-center">
      <span />
      <span className="h-[5px] rounded-full bg-[#85858a]" />
    </div>
  </section>
);

/* ---------- transport ---------- */

const Stack = ({ top, bottom, className }) => (
  <div className={clsx('flex flex-col', className || 'items-center')}>
    <div className="flex h-[14px] items-center whitespace-nowrap text-[11px] text-[#dcdcdf]">{top}</div>
    <div className="flex h-[13px] items-center gap-[6px] whitespace-nowrap text-[9px] text-[#919195]">{bottom}</div>
  </div>
);

const TButton = ({ label, w, h, children }) => (
  <button type="button" aria-label={label}><Svg w={w} h={h}><g fill="currentColor" stroke="none">{children}</g></Svg></button>
);

const Transport = () => (
  <footer className="border-t-2 border-[#2d4f7b] bg-[#38393e] pb-[7px] pt-[2px]">
    <div className="grid h-[35px] grid-cols-[19fr_57fr_68fr_82fr_142fr_107fr_133fr_108fr_44fr_40fr_61fr_40fr_36fr_43fr_101fr_19fr] items-center bg-[#151417] text-[#c9c9cc] [clip-path:polygon(0_0,98.300%_0,97.400%_100%,0_100%)]">
      <Svg w={10} h={22}><path d="M2 2h2M5.500 5h2M7 9h2M7 13h2M5.500 17h2M2 20h2" strokeWidth="2" className="text-[#77777b]" /></Svg>
      <Stack className="items-start" top="48.0 kHz" bottom={<span className="text-[#dcdcdf]">26.3 ms</span>} />
      <Stack className="items-start" top="13:21 days" bottom="Record Max" />
      <Stack top="00:05:31.167" bottom={<>Seconds <Down className="w-[7px]" /></>} />
      <Stack top={<span className="text-[16px] font-bold">00180.02.03.12</span>} bottom={<>Bars <Down className="w-[7px]" /></>} />
      <div className="flex items-center justify-center gap-[9px]">
        <TButton label="Previous marker" w={9} h={12}><path d="M9 0v12L0 6z" /></TButton>
        <TButton label="Rewind" w={16} h={12}><path d="M8 0v12L0 6zM16 0v12L8 6z" /></TButton>
        <TButton label="Forward" w={16} h={12}><path d="M0 0v12l8-6zM8 0v12l8-6z" /></TButton>
        <TButton label="Next marker" w={10} h={12}><path d="M0 0v12l10-6z" /></TButton>
        <TButton label="Return to zero" w={12} h={12}><path d="M0 0h2v12H0zM12 0v12L2.500 6z" /></TButton>
      </div>
      <div className="flex items-center justify-center gap-[14px]">
        <button type="button" aria-label="Stop" className="h-[17px] w-[17px] bg-[#41bbdc]" />
        <TButton label="Play" w={14} h={17}><path d="M0 0v17l14-8.500z" /></TButton>
        <TButton label="Record" w={17} h={17}><circle cx="8.500" cy="8.500" r="8.500" /></TButton>
        <button type="button" aria-label="Loop" className="text-[#a0a0a4]">
          <Svg w={27} h={19}><path d="M13.500 9q0 8-5 8.500Q1.500 17.500 1.500 9.500 1.500 1.500 9 1.500h9q7.500 0 7.500 8t-7 8h-4.500Q18.500 15 18.500 9.500" strokeWidth="2" /></Svg>
        </button>
      </div>
      <div className="flex items-center pl-2 text-[11px] leading-[13px]">
        <div className="border-r border-[#3a3a3e] pr-[5px] text-[10px] font-bold text-[#3c7593]">L<br />R</div>
        <div className="pl-[5px] text-[#dcdcdf]">00115.01.01.00<br />00116.01.01.00</div>
      </div>
      <Stack top="Off" bottom="Sync" />
      <div className="grid grid-cols-2 items-center justify-items-center gap-y-[3px] text-[#8a8a8e]">
        <Svg w={14} h={8}><path d="M0 1.500h5l3 4.500h6M9 3h5" /></Svg>
        <Svg w={13} h={9}><path d="M1 0v9M4 0v9M1 4.500h7M9 1v7" strokeWidth="1.300" /><path d="M7 2.500h6v4H7z" fill="currentColor" stroke="none" /></Svg>
        <Svg w={10} h={10}><circle cx="5" cy="5" r="2.800" strokeWidth="1.500" /><path d="M5 0v2M5 8v2M0 5h2M8 5h2M1.500 1.500l1.200 1.200M7.300 7.300l1.200 1.200M8.500 1.500 7.300 2.700M2.700 7.300 1.500 8.500" strokeWidth="1.200" /></Svg>
        <Svg w={14} h={9}><path d="M0 4.500h14M4 0v9M10 0v9" strokeWidth="1.200" /><path d="M4 2h6v5H4z" fill="currentColor" stroke="none" /></Svg>
      </div>
      <Stack
        top={
          <span className="flex items-center gap-[8px] text-[#88888c]">
            <Svg w={9} h={9}><circle cx="4.500" cy="4.500" r="4" fill="currentColor" stroke="none" className="text-[#66666a]" /></Svg>
            <Svg w={10} h={10}><path d="M4.500 4.500 9 9" strokeWidth="1.800" /><path d="M1.500 3.500a2 2 0 0 0 3.500-2" strokeWidth="1.600" /></Svg>
            <Svg w={11} h={10} className="text-[#4fb0e6]"><path d="M3 1h3l1.500 2.500L9 0l2 10H0z" fill="currentColor" stroke="none" /></Svg>
          </span>
        }
        bottom="Metronome"
      />
      <Stack top="4 / 4" bottom="Timing" />
      <Stack top="F♯m" bottom="Key" />
      <Stack top="130.00" bottom="Tempo" />
      <div className="flex flex-col gap-[5px] pl-[9px]">
        <div className="flex h-[8px] w-[75px] flex-col gap-px">
          <span className="h-[3px] bg-[#38383c]" />
          <span className="h-[3px] bg-[#38383c]" />
        </div>
        <div className="flex items-center gap-[6px]">
          <span className="flex h-[9px] w-14 bg-[repeating-linear-gradient(90deg,#2a2a2e_0_2px,#151417_2px_3px)]">
            <span className="h-full w-[42px] border-r-2 border-[#a6d8ec] bg-[repeating-linear-gradient(90deg,#4a9dbe_0_2px,#2c5f75_2px_3px)]" />
          </span>
          <Svg w={14} h={9} className="text-[#4fb0e6]"><circle cx="4.500" cy="4.500" r="4.500" fill="currentColor" stroke="none" /><circle cx="9.300" cy="4.500" r="3.700" fill="#151417" strokeWidth="1.400" /></Svg>
        </div>
      </div>
    </div>
  </footer>
);

export default function App() {
  return (
    <div className="min-h-screen overflow-hidden bg-[#232327] font-['Liberation_Sans',Arial,sans-serif] leading-none">
      <Toolbar />
      <div className="h-[6px] bg-[#232327]" />
      <main>
        <section aria-label="Arrangement" className="flex">
          <LaneHeads />
          <Arrangement />
        </section>
        <Console />
      </main>
      <Transport />
    </div>
  );
}
